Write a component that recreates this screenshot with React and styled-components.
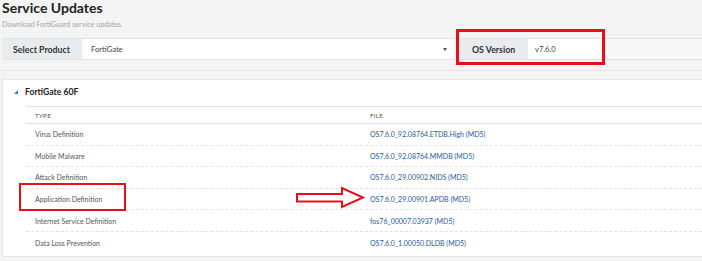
import React from "react";
import styled, { createGlobalStyle } from "styled-components";

const Global = createGlobalStyle`
  html, body { margin: 0; padding: 0; background: #f4f4f4; }
  body { font-family: Lato, "Open Sans", "Liberation Sans", sans-serif; color: #333; overflow: hidden; }
`;

const Page = styled.div`
  position: relative;
  width: 702px;
  height: 261px;
  padding-left: 2px;
  box-sizing: border-box;
`;

const Title = styled.h1`
  margin: 0;
  font-size: 14px;
  line-height: 15px;
  font-weight: 700;
  color: #222;
`;

const Subtitle = styled.div`
  font-size: 7.2px;
  line-height: 11px;
  color: #a4a4a4;
  margin-top: 4px;
`;

const FormBar = styled.div`
  margin-top: 8px;
  display: flex;
  align-items: stretch;
  height: 20px;
  border-top: 1px solid #e2e2e2;
  border-bottom: 1px solid #e2e2e2;
  background: #f7f7f7;
`;

const FieldLabel = styled.div`
  width: ${(p) => p.$w}px;
  box-sizing: border-box;
  padding-left: ${(p) => p.$pad}px;
  background: #e9ecef;
  font-size: 8.8px;
  font-weight: 700;
  color: #333;
  display: flex;
  align-items: center;
`;

const FieldValue = styled.div`
  width: ${(p) => p.$w}px;
  box-sizing: border-box;
  padding: 0 4px 0 ${(p) => p.$pad}px;
  background: #fff;
  font-size: 7.6px;
  color: #444;
  display: flex;
  align-items: center;
  justify-content: space-between;
  margin-right: ${(p) => p.$mr || 0}px;
`;

const Caret = styled.span`
  width: 0;
  height: 0;
  border-left: 2.5px solid transparent;
  border-right: 2.5px solid transparent;
  border-top: 3px solid #555;
  margin-right: 1px;
`;

const Section = styled.div`
  margin-top: 10px;
  margin-left: -2px;
  padding: 8px 0 0 2px;
  border-top: 1px solid #e6e6e6;
`;

const Card = styled.div`
  background: #fff;
  border: 1px solid #e6e6e6;
  border-right: none;
  height: 178px;
  box-sizing: border-box;
`;

const CardHeader = styled.div`
  display: flex;
  align-items: center;
  gap: 7px;
  height: 24px;
  padding-left: 11px;
  font-size: 8.6px;
  font-weight: 700;
  color: #222;
`;

const Table = styled.div`
  margin-left: 23px;
  margin-top: 2px;
`;

const HeadRow = styled.div`
  display: grid;
  grid-template-columns: 335px 1fr;
  height: 16px;
  align-items: center;
  border-top: 1px solid #dbe3ec;
  border-bottom: 1px solid #dde3ea;
  font-size: 6.2px;
  color: #a9a9a9;
  letter-spacing: 0.3px;
`;

const Row = styled.div`
  display: grid;
  grid-template-columns: 335px 1fr;
  height: 21.6px;
  align-items: center;
  border-bottom: ${(p) => (p.$last ? "none" : "1px dashed #e3e3e3")};
  box-sizing: border-box;
  font-size: 7px;
`;

const Cell = styled.div`
  padding-left: 9px;
  color: #555;
`;

const FileLink = styled.a`
  padding-left: 9px;
  color: #285a97;
  text-decoration: none;
`;

const Annotation = styled.div`
  position: absolute;
  left: ${(p) => p.$x}px;
  top: ${(p) => p.$y}px;
  width: ${(p) => p.$w}px;
  height: ${(p) => p.$h}px;
  border: ${(p) => p.$b}px solid #e4101a;
  box-sizing: border-box;
  pointer-events: none;
`;

const ArrowSvg = styled.svg`
  position: absolute;
  left: 294px;
  top: 186px;
`;

const rows = [
  ["Virus Definition", "OS7.6.0_92.08764.ETDB.High (MD5)"],
  ["Mobile Malware", "OS7.6.0_92.08764.MMDB (MD5)"],
  ["Attack Definition", "OS7.6.0_29.00902.NIDS (MD5)"],
  ["Application Definition", "OS7.6.0_29.00901.APDB (MD5)"],
  ["Internet Service Definition", "fos76_00007.03937 (MD5)"],
  ["Data Loss Prevention", "OS7.6.0_1.00050.DLDB (MD5)"],
];

export default function App() {
  return (
    <Page>
      <Global />
      <Title>Service Updates</Title>
      <Subtitle>Download FortiGuard service updates</Subtitle>
      <FormBar>
        <FieldLabel $w={80} $pad={11}>Select Product</FieldLabel>
        <FieldValue $w={370} $pad={9} $mr={8}>
          <span>FortiGate</span>
          <Caret />
        </FieldValue>
        <FieldLabel $w={68} $pad={12}>OS Version</FieldLabel>
        <FieldValue $w={72} $pad={7}>
          <span>v7.6.0</span>
        </FieldValue>
      </FormBar>
      <Section>
        <Card>
          <CardHeader>
            <svg width="4" height="4" viewBox="0 0 4 4">
              <polygon points="4,0 4,4 0,4" fill="#3a7bd0" />
            </svg>
            FortiGate 60F
          </CardHeader>
          <Table>
            <HeadRow>
              <Cell>TYPE</Cell>
              <Cell>FILE</Cell>
            </HeadRow>
            {rows.map(([t, f], i) => (
              <Row key={t} $last={i === rows.length - 1}>
                <Cell>{t}</Cell>
                <FileLink href="#">{f}</FileLink>
              </Row>
            ))}
          </Table>
        </Card>
      </Section>
      <Annotation $x={456} $y={29} $w={149} $h={36} $b={3} />
      <Annotation $x={19} $y={183} $w={107} $h={28} $b={2} />
      <ArrowSvg width="72" height="24" viewBox="0 0 72 24">
        <polygon
          points="3,8 48,8 48,2 69,11.5 48,21 48,15.5 3,15.5"
          fill="#fff"
          stroke="#e4101a"
          strokeWidth="2"
        />
      </ArrowSvg>
    </Page>
  );
}
